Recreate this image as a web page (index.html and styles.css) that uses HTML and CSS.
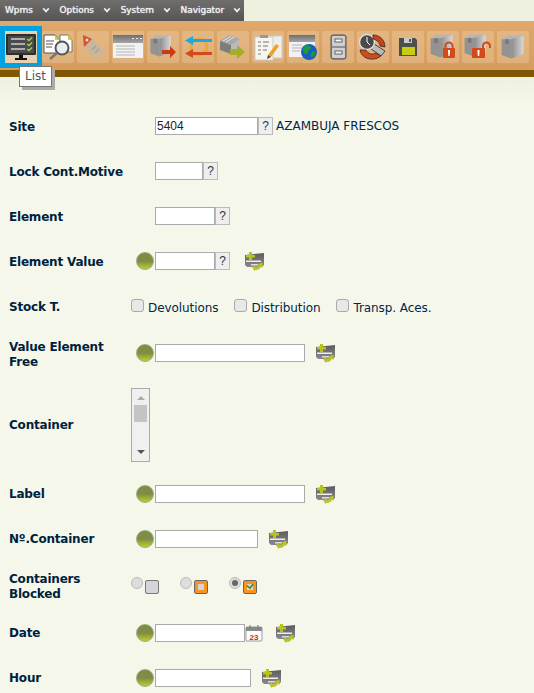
FILE: index.html
```html
<!DOCTYPE html>
<html lang="en">
<head>
    <meta charset="UTF-8">
    <title>Wpms</title>
    <link rel="stylesheet" href="styles.css">
</head>
<body>
    <svg class="defs" width="0" height="0">
        <defs>
            <linearGradient id="boxg" x1="0" y1="0" x2="1" y2="0">
                <stop offset="0" stop-color="#8b8b8b"/>
                <stop offset="1" stop-color="#d8d8d8"/>
            </linearGradient>
            <linearGradient id="adjg" x1="0" y1="0" x2="0" y2="1">
                <stop offset="0" stop-color="#5c5c5e"/>
                <stop offset="1" stop-color="#8a8a8c"/>
            </linearGradient>
            <linearGradient id="barg" x1="0" y1="0" x2="0" y2="1">
                <stop offset="0" stop-color="#6e6e6e"/>
                <stop offset="1" stop-color="#a5a5a5"/>
            </linearGradient>
            <symbol id="box" viewBox="0 0 32 32">
                <path d="M3 7 L9 3 L28 3 L26 7 Z" fill="#b5b5b5"/>
                <path d="M3 7 L14 7 L14 29 L3 25 Z" fill="#939393"/>
                <path d="M14 7 L28 3 L28 24 L14 29 Z" fill="url(#boxg)"/>
                <path d="M7 7 L11 7 L11 13 L7 12 Z" fill="#777"/>
            </symbol>
            <symbol id="adjust" viewBox="0 0 20 19">
                <path d="M1 3 L20 1 V13 L18 15 H3 L1 13 Z" fill="url(#adjg)"/>
                <rect x="2" y="8.500" width="15" height="1.500" fill="#eee"/>
                <rect x="7" y="12" width="7" height="1.500" fill="#ddd"/>
                <path d="M2 3 h3 V0 h3 V3 h3 v2.500 h-3 V8 H5 V5.500 H2 Z" fill="#b8c41e"/>
                <path d="M8 15 l3 -1.500 v1 a4 4 0 0 0 4 -1 l-1.500 -1 l5 -2 v5.500 l-1.500 -1 a6 6 0 0 1 -6 3 l0 1.500 z" fill="#b9c42a"/>
            </symbol>
        </defs>
    </svg>

    <nav class="menu">
        <span class="menu-item">Wpms<i class="chev"></i></span>
        <span class="menu-item">Options<i class="chev"></i></span>
        <span class="menu-item">System<i class="chev"></i></span>
        <span class="menu-item">Navigator<i class="chev"></i></span>
    </nav>

    <div class="toolbar">
        <div class="tool tool-active">
            <svg viewBox="0 0 32 32"><rect x="1" y="3" width="30" height="21" rx="1" fill="#2e2e2e"/><rect x="3" y="5" width="26" height="17" fill="#4b4b4b"/><path d="M6 8h14M6 13h14M6 18h14" stroke="#cfcfcf" stroke-width="1.500"/><path d="M22 8l2 1.500 3-3M22 13l2 1.500 3-3M22 18l2 1.500 3-3" stroke="#9fd04a" stroke-width="1.500" fill="none"/><path d="M14 24h4v3h4v2H10v-2h4z" fill="#111"/></svg>
        </div>
        <div class="tool">
            <svg viewBox="0 0 32 32"><path d="M2 4H13L18 9V22H2Z" fill="#fff" stroke="#555"/><path d="M18 4H26L30 9V21H18Z" fill="#fff" stroke="#777"/><path d="M13 4l5 5h-5zM26 4l4 5h-4z" fill="#cfd04a"/><path d="M4 10h8M4 13h7M4 16h6" stroke="#555"/><circle cx="20" cy="17" r="6.500" fill="#e8eef0" stroke="#555" stroke-width="2"/><path d="M15 22l-7 6" stroke="#777" stroke-width="2.500"/></svg>
        </div>
        <div class="tool">
            <svg viewBox="0 0 32 32"><path d="M11 4 L27 20 L19 28 L7 15 Z" fill="#c6b7a0"/><path d="M6 4 L15 8 L7 16 Z" fill="#d5522a"/><circle cx="10" cy="9" r="1.500" fill="#f5e5d0"/><path d="M15 19l4-4M18 22l4-4" stroke="#ad9f8b" stroke-width="1.500"/></svg>
        </div>
        <div class="tool">
            <svg viewBox="0 0 32 32"><rect x="1" y="4" width="30" height="23" fill="#f2f2f2"/><rect x="1" y="4" width="30" height="8" fill="url(#barg)"/><path d="M20 7.500h2M24 7.500h2M28 7.500h2" stroke="#eee"/><path d="M4 15h19M4 18h19M4 21h19M4 24h19" stroke="#b5b5b5"/></svg>
        </div>
        <div class="tool">
            <svg viewBox="0 0 32 32"><use href="#box" width="26" height="26" x="1" y="2"/><path d="M15 19H23V15L29 21L23 27V23H15Z" fill="#cc3a14"/></svg>
        </div>
        <div class="tool">
            <svg viewBox="0 0 32 32"><circle cx="17" cy="16" r="8" fill="none" stroke="#e8a93a" stroke-width="3"/><path d="M30 8H11V5L3 9.500L11 14V11H30Z" fill="#1ea8e0"/><path d="M30 21H11V18L3 22.500L11 27V24H30Z" fill="#d24a1e"/></svg>
        </div>
        <div class="tool">
            <svg viewBox="0 0 32 32"><path d="M3 10 L12 4 L23 8 L14 14 Z" fill="#a9a9a9"/><path d="M3 10 L14 14 V23 L3 19 Z" fill="#7d7d7d"/><path d="M14 14 L23 8 V17 L14 23 Z" fill="#bbb"/><path d="M6 10l8-5M9 11l8-5" stroke="#e4e4e4"/><path d="M13 18H20V14L28 21L20 28V24H13Z" fill="#a5ae2a"/></svg>
        </div>
        <div class="tool">
            <svg viewBox="0 0 32 32"><rect x="14" y="5" width="16" height="22" fill="#eeeeee" stroke="#ccc"/><rect x="3" y="6" width="18" height="23" fill="#f7f5ef" stroke="#ccc"/><rect x="8" y="4" width="8" height="3" fill="#999"/><path d="M6 11h3M11 11h6M6 15h3M11 15h5M6 19h3M11 19h4M6 23h3" stroke="#777"/><path d="M16 24l8-11 3 2-8 11z" fill="#f0a020"/><path d="M16 24l-1 4 4-2z" fill="#444"/></svg>
        </div>
        <div class="tool">
            <svg viewBox="0 0 32 32"><rect x="2" y="4" width="26" height="22" fill="#f2f2f2"/><rect x="2" y="4" width="26" height="7" fill="url(#barg)"/><path d="M5 14h10M5 17h10M5 20h8" stroke="#b5b5b5"/><circle cx="22" cy="21" r="8" fill="#1a5fc0"/><path d="M18 15c3-1 6 0 6 2s-3 2-3 4-3 3-4 1-2-5 1-7zM25 21c2-1 4 0 3 2s-3 4-4 3 0-4 1-5z" fill="#1f9a3c"/></svg>
        </div>
        <div class="tool">
            <svg viewBox="0 0 32 32"><rect x="9" y="4" width="15" height="24" rx="2" fill="#8f8f8f" stroke="#555"/><rect x="10" y="5" width="13" height="10" rx="1" fill="#cfcfcf"/><rect x="10" y="17" width="13" height="10" rx="1" fill="#cfcfcf"/><rect x="13" y="8" width="7" height="3" fill="#f4f4f4" stroke="#333" stroke-width=".7"/><rect x="13" y="20" width="7" height="3" fill="#f4f4f4" stroke="#333" stroke-width=".7"/></svg>
        </div>
        <div class="tool">
            <svg viewBox="0 0 32 32"><path d="M14 11l14 9-4 5L10 15z" fill="#b9b9b9" stroke="#444"/><circle cx="10" cy="11" r="7.500" fill="#4a4a4a" stroke="#ddd" stroke-width="1.500"/><path d="M10 6v5l3 3" stroke="#fff" fill="none"/><path d="M16 4c7 0 12 5 12 12l-5-1c0-3-3-6-7-7z" fill="#c8421a" stroke="#222" stroke-width=".7"/><path d="M3 19c1 6 7 10 14 9 3 0 5-2 7-3l-5-3c-4 2-8 1-10-3z" fill="#d04c1e" stroke="#222" stroke-width=".7"/></svg>
        </div>
        <div class="tool">
            <svg viewBox="0 0 32 32"><path d="M7 7H23L25 9V25H7Z" fill="#4e4e4c"/><rect x="12" y="7" width="8" height="5" fill="#c9c9c9"/><rect x="17" y="8" width="2" height="3" fill="#555"/><rect x="10" y="16" width="13" height="8" fill="#c9cc14"/></svg>
        </div>
        <div class="tool">
            <svg viewBox="0 0 32 32"><use href="#box" width="28" height="28" x="1" y="1"/><path d="M18.500 18V15a3.500 3.500 0 0 1 7 0V18" fill="none" stroke="#cf4a1c" stroke-width="2"/><rect x="16" y="17" width="12" height="10" rx="1" fill="#d5481a"/><path d="M21 19h2v2l-.3 4h-1.400l-.3-4z" fill="#fff"/></svg>
        </div>
        <div class="tool">
            <svg viewBox="0 0 32 32"><use href="#box" width="27" height="27" x="0" y="1"/><path d="M21 18V15a3.500 3.500 0 0 1 7 0V17" fill="none" stroke="#cf4a1c" stroke-width="2"/><rect x="10" y="17" width="13" height="10" rx="1" fill="#d5481a"/><path d="M15.500 19h2v2l-.3 4h-1.400l-.3-4z" fill="#fff"/></svg>
        </div>
        <div class="tool">
            <svg viewBox="0 0 32 32"><use href="#box" width="28" height="28" x="2" y="2"/></svg>
        </div>
        <div class="tooltip">List</div>
    </div>
    <div class="toolbar-edge"></div>

    <form class="form">
        <div class="row">
            <label class="lbl">Site</label>
            <div class="cell">
                <input class="txt w-site" type="text" value="5404"><button class="ask" type="button">?</button>
                <span class="desc">AZAMBUJA FRESCOS</span>
            </div>
        </div>
        <div class="row">
            <label class="lbl">Lock Cont.Motive</label>
            <div class="cell">
                <input class="txt w-lock" type="text"><button class="ask" type="button">?</button>
            </div>
        </div>
        <div class="row">
            <label class="lbl">Element</label>
            <div class="cell">
                <input class="txt w-element" type="text"><button class="ask" type="button">?</button>
            </div>
        </div>
        <div class="row">
            <label class="lbl">Element Value</label>
            <div class="cell cell-led">
                <span class="led"></span>
                <input class="txt w-element" type="text"><button class="ask" type="button">?</button>
                <svg class="adj adj-far"><use href="#adjust"/></svg>
            </div>
        </div>
        <div class="row">
            <label class="lbl">Stock T.</label>
            <div class="cell cell-wide">
                <span class="check"><i class="box"></i>Devolutions</span>
                <span class="check"><i class="box"></i>Distribution</span>
                <span class="check"><i class="box"></i>Transp. Aces.</span>
            </div>
        </div>
        <div class="row row-free">
            <label class="lbl">Value Element<br>Free</label>
            <div class="cell cell-led">
                <span class="led"></span>
                <input class="txt w-free" type="text">
                <svg class="adj"><use href="#adjust"/></svg>
            </div>
        </div>
        <div class="row row-list">
            <label class="lbl">Container</label>
            <div class="cell cell-wide">
                <div class="listbox">
                    <i class="arrow arrow-up"></i>
                    <i class="thumb"></i>
                    <i class="arrow arrow-down"></i>
                </div>
            </div>
        </div>
        <div class="row row-after">
            <label class="lbl">Label</label>
            <div class="cell cell-led">
                <span class="led"></span>
                <input class="txt w-free" type="text">
                <svg class="adj"><use href="#adjust"/></svg>
            </div>
        </div>
        <div class="row row-after">
            <label class="lbl">Nº.Container</label>
            <div class="cell cell-led">
                <span class="led"></span>
                <input class="txt w-site" type="text">
                <svg class="adj"><use href="#adjust"/></svg>
            </div>
        </div>
        <div class="row row-after row-blocked">
            <label class="lbl">Containers<br>Blocked</label>
            <div class="cell cell-wide cell-radios">
                <span class="opt"><i class="radio"></i><i class="state"></i></span>
                <span class="opt"><i class="radio"></i><i class="state state-on"></i></span>
                <span class="opt"><i class="radio radio-on"></i><i class="state state-on"><svg viewBox="0 0 10 8"><path d="M1 3l4 3 4-5" fill="none" stroke="#4d8a28" stroke-width="2"/></svg></i></span>
            </div>
        </div>
        <div class="row row-after row-date">
            <label class="lbl">Date</label>
            <div class="cell cell-led">
                <span class="led"></span>
                <input class="txt w-date" type="text">
                <svg class="cal" viewBox="0 0 18 18"><rect x="1" y="3" width="16" height="14" rx="1" fill="#fff" stroke="#999"/><rect x="1" y="3" width="16" height="4" fill="#8a8a8a"/><path d="M5 1v4M13 1v4" stroke="#777"/><text x="9" y="15.500" class="cal-num">23</text></svg>
                <svg class="adj adj-cal"><use href="#adjust"/></svg>
            </div>
        </div>
        <div class="row row-after">
            <label class="lbl">Hour</label>
            <div class="cell cell-led">
                <span class="led"></span>
                <input class="txt w-hour" type="text">
                <svg class="adj"><use href="#adjust"/></svg>
            </div>
        </div>
    </form>
</body>
</html>
```

FILE: styles.css
```css
html, body {
    margin: 0;
    padding: 0;
}

body {
    width: 534px;
    height: 693px;
    overflow: hidden;
    background: linear-gradient(#eef0e0 77px, #f5f7ea 105px);
    color: #00264d;
    font-family: "DejaVu Sans", sans-serif;
    font-size: 12px;
}

.defs {
    display: block;
    height: 0;
}

/* Top menu */
.menu {
    display: flex;
    width: 239px;
    height: 21px;
    padding-left: 5px;
    background: linear-gradient(#6f6e6c, #565553);
}

.menu-item {
    display: flex;
    align-items: center;
    height: 19px;
    color: #f2f2f2;
    font-size: 9px;
    letter-spacing: -0.050px;
    text-shadow: 0 0 1px #fff;
}

.chev {
    width: 4px;
    height: 4px;
    margin: -2px 10.700px 0 10px;
    border-right: 2px solid #eee;
    border-bottom: 2px solid #eee;
    transform: rotate(45deg) scale(0.8);
}

/* Toolbar */
.toolbar {
    position: relative;
    display: flex;
    gap: 3px;
    height: 49px;
    padding: 10px 0 0 5px;
    box-sizing: border-box;
    background: linear-gradient(#dfa96b, #d69c5e);
}

.toolbar-edge {
    height: 7px;
    background: #7f5700;
    margin-bottom: 26.500px;
}

.tool {
    width: 32px;
    height: 32px;
    background: rgba(255, 240, 220, 0.22);
    border-radius: 2px;
}

.tool svg {
    display: block;
    width: 32px;
    height: 32px;
}

.tool-active {
    background: #e8cfae;
    outline: 5px solid #00a2e3;
    border-radius: 0;
    margin-right: 2px;
}

.tooltip {
    position: absolute;
    left: 19px;
    top: 45px;
    z-index: 2;
    padding: 2px 5px 3px;
    background: #fff;
    border: 1px solid #777;
    color: #555;
    font-size: 12px;
    line-height: 14px;
    box-shadow: 3px 3px 0 #aaa;
}

/* Form */
.form {
    padding-left: 9px;
}

.row {
    display: flex;
    align-items: center;
    height: 45px;
}

.row-free {
    height: 47px;
    margin-top: 1px;
}

.row-free .lbl {
    padding-top: 4px;
}

.row-list {
    height: 95px;
}

.row-list .lbl {
    padding-top: 3px;
}

.row-list .listbox {
    margin-top: 2px;
}

.row-blocked {
    height: 47px;
}

.row-blocked .lbl {
    margin-top: 3px;
}

.row-date {
    height: 47px;
    padding-top: 2px;
    box-sizing: border-box;
}

.lbl {
    width: 122px;
    flex: none;
    padding-top: 2px;
    font-size: 12px;
    font-weight: bold;
    line-height: 15px;
    letter-spacing: -0.200px;
    color: #001f40;
}

.row-after .lbl {
    padding-top: 0;
}

.cell {
    display: flex;
    align-items: center;
    padding-left: 24px;
}

.cell-led {
    padding-left: 5px;
}

.cell-wide {
    padding-left: 0;
}

.led {
    width: 16px;
    height: 16px;
    margin-right: 1px;
    border-radius: 50%;
    border: 1px solid #93b07c;
    background: linear-gradient(#7f8c45 50%, #c2cc2e);
}

.txt {
    height: 18px;
    padding: 0 1px;
    box-sizing: border-box;
    border: 1px solid #aaa;
    background: #fff;
    color: #222;
    font-family: "Liberation Sans", sans-serif;
    font-size: 12px;
    outline: none;
}

.w-site { width: 103px; }
.w-lock { width: 48px; }
.w-element { width: 60px; }
.w-free { width: 150px; }
.w-date { width: 90px; }
.w-hour { width: 96px; }

.ask {
    width: 15px;
    height: 18px;
    padding: 0;
    box-sizing: border-box;
    border: 1px solid #bbb;
    background: #eee;
    color: #333;
    font-family: "Liberation Sans", sans-serif;
    font-size: 12px;
}

.desc {
    margin-left: 3px;
    color: #00264d;
    font-size: 12px;
}

.adj {
    width: 20px;
    height: 19px;
    margin-left: 10px;
}

.adj-far {
    margin-left: 14px;
}

.adj-cal {
    margin-left: 12px;
}

.cal {
    width: 18px;
    height: 18px;
}

.cal-num {
    fill: #cc2a1a;
    font-family: "Liberation Sans", sans-serif;
    font-size: 8px;
    font-weight: bold;
    text-anchor: middle;
}

.check {
    display: flex;
    align-items: flex-start;
    margin-right: 16px;
    padding-top: 4px;
    line-height: 15px;
    letter-spacing: -0.080px;
    color: #00264d;
}

.box {
    width: 11px;
    height: 11px;
    margin: -2px 4px 0 0;
    border: 1px solid #aaa;
    border-radius: 3px;
    background: #e8e8e8;
}

.listbox {
    display: flex;
    flex-direction: column;
    align-items: center;
    width: 17px;
    height: 72px;
    border: 1px solid #aaa;
    background: #f0f0f0;
}

.thumb {
    width: 13px;
    height: 17px;
    margin-top: 5px;
    background: #c4c4c4;
}

.arrow {
    width: 0;
    height: 0;
    border-left: 4px solid transparent;
    border-right: 4px solid transparent;
}

.arrow-up {
    margin-top: 7px;
    border-bottom: 4px solid #aaa;
}

.arrow-down {
    margin-top: auto;
    margin-bottom: 7px;
    border-top: 4px solid #555;
}

.cell-radios {
    gap: 21px;
    margin-top: 3px;
}

.opt {
    display: flex;
    align-items: flex-start;
    gap: 2px;
}

.radio {
    width: 10px;
    height: 10px;
    margin-top: -3px;
    border: 1px solid #bbb;
    border-radius: 50%;
    background: #ddd;
}

.radio-on {
    position: relative;
}

.radio-on::after {
    content: "";
    position: absolute;
    left: 2px;
    top: 2px;
    width: 6px;
    height: 6px;
    border-radius: 50%;
    background: #666;
}

.state {
    display: flex;
    align-items: center;
    justify-content: center;
    width: 12px;
    height: 12px;
    border: 1px solid #777;
    border-radius: 2px;
    background: #d4d5da;
}

.state-on {
    border-color: #666;
    box-shadow: inset 0 0 0 3px #f7941d;
}

.state-on svg {
    width: 8px;
    height: 7px;
}
```
